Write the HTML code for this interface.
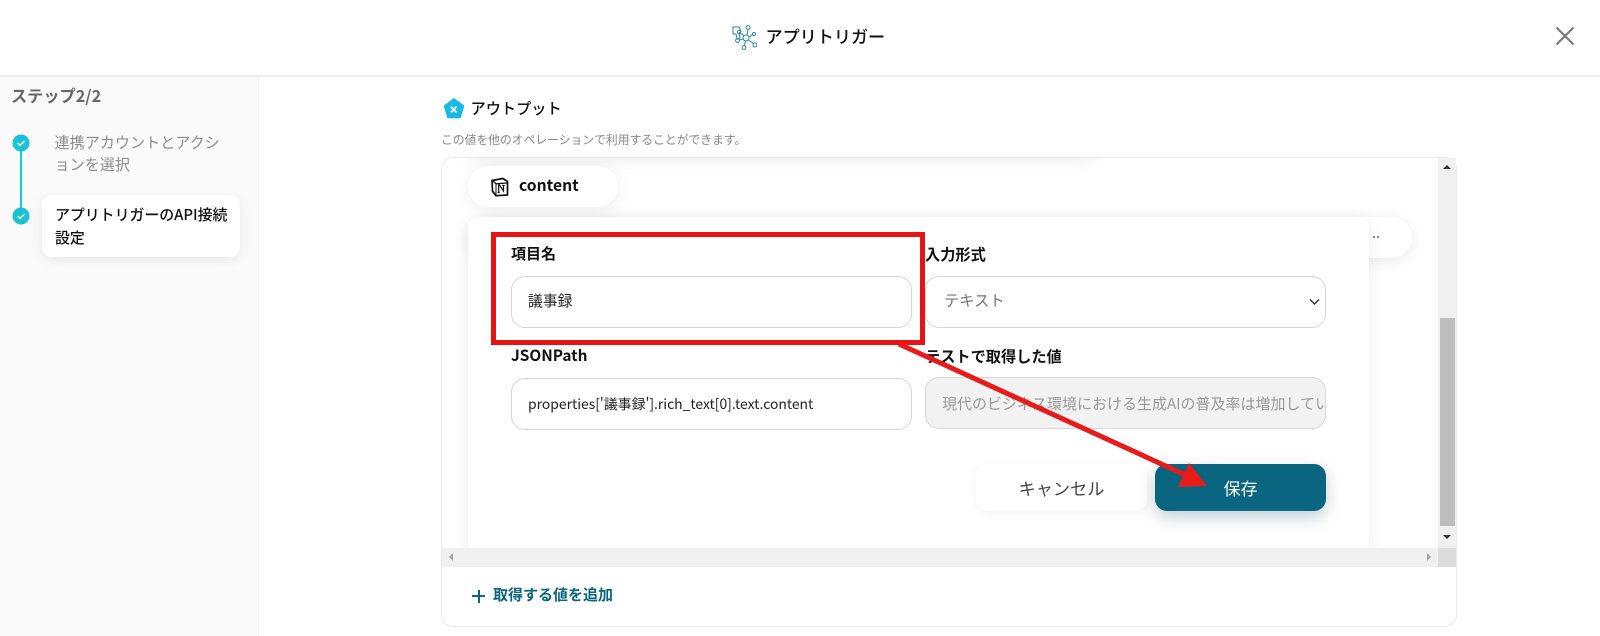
<!DOCTYPE html>
<html lang="ja"><head><meta charset="utf-8"><title>アプリトリガー</title>
<style>
*{box-sizing:border-box}
html,body{margin:0;padding:0}
body{width:1600px;height:636px;overflow:hidden;background:#fff;position:relative;font-family:"Noto Sans CJK JP","Liberation Sans",sans-serif;color:#222}
.a{position:absolute;white-space:nowrap}
.t{line-height:20px}
.inp{position:absolute;border:1px solid #d6d6d6;border-radius:14px;background:#fff;height:52px;width:401px}
</style></head><body>
<div class="a" style="left:0;top:0;width:1600px;height:77px;border-bottom:2px solid #efefef;background:#fff"></div>
<svg class="a" style="left:731px;top:24px" width="26" height="26" viewBox="0 0 26 26" fill="none" stroke="#2a8aa0" stroke-width="1">
<path d="M2 3h6l2 4-2 2 1 5-3 1-1-5H2z" stroke-width="1"/>
<circle cx="15" cy="14" r="3"/><circle cx="17" cy="3.500" r="1.900"/><circle cx="23" cy="10" r="1.500"/><circle cx="24" cy="21" r="2"/><circle cx="13" cy="23.500" r="1.900"/><circle cx="6.500" cy="16.500" r="1.900"/><circle cx="8" cy="8" r="1.700"/>
<path d="M16 11l1-5.500M18 13l3.600-2.500M17.500 16l5 3.500M14.500 17l-1 4.500M12 15l-3.700 1M13 12l-3.700-3"/></svg>
<div class="a" style="left:765.500px;top:24px;font-size:17.100px;font-weight:500;line-height:24px;color:#111">アプリトリガー</div>
<svg class="a" style="left:1555px;top:26px" width="20" height="20" viewBox="0 0 20 20"><path d="M1.500 1.500l17 17M18.500 1.500l-17 17" stroke="#777" stroke-width="2"/></svg>

<div class="a" style="left:0;top:77px;width:259px;height:559px;background:#fafafa;border-right:1px solid #eee"></div>
<div class="a t" style="left:11px;top:85px;font-size:16.200px;font-weight:700;color:#666">ステップ2/2</div>
<div class="a" style="left:19.500px;top:145px;width:2px;height:70px;background:#12cfd8"></div>
<svg class="a" style="left:12px;top:134px" width="18" height="18" viewBox="0 0 18 18"><defs><linearGradient id="g" x1="1" y1="0" x2="0" y2="1"><stop offset="0" stop-color="#22b8ea"/><stop offset="1" stop-color="#10ccc8"/></linearGradient></defs><circle cx="9" cy="9" r="8.500" fill="url(#g)"/><path d="M5.500 9l2.500 2.500 4.500-4.500" fill="none" stroke="#fff" stroke-width="1.500"/></svg>
<svg class="a" style="left:12px;top:207px" width="18" height="18" viewBox="0 0 18 18"><circle cx="9" cy="9" r="8.500" fill="url(#g)"/><path d="M5.500 9l2.500 2.500 4.500-4.500" fill="none" stroke="#fff" stroke-width="1.500"/></svg>
<div class="a" style="left:54.500px;top:131px;font-size:15.100px;line-height:22px;color:#8c8c8c">連携アカウントとアクシ<br>ョンを選択</div>
<div class="a" style="left:42px;top:195px;width:198px;height:62px;border-radius:10px;background:#fff;box-shadow:0 3px 12px rgba(0,0,0,.07)"></div>
<div class="a" style="left:55px;top:204px;font-size:14.900px;font-weight:500;line-height:22.500px;color:#111">アプリトリガーのAPI接続<br>設定</div>

<svg class="a" style="left:443px;top:98px" width="22" height="22" viewBox="0 0 22 22"><path d="M11 1l9.500 7-3.500 11.500H5L1.500 8z" fill="#17b9e6" stroke="#17b9e6" stroke-width="1.500" stroke-linejoin="round"/><path d="M8 8.500l5.500 6M13.500 8.500l-5.500 6" stroke="#fff" stroke-width="1.700"/></svg>
<div class="a t" style="left:470.500px;top:97.500px;font-size:15.200px;font-weight:500;color:#111">アウトプット</div>
<div class="a t" style="left:441px;top:130px;font-size:11.800px;color:#888">この値を他のオペレーションで利用することができます。</div>

<div class="a" style="left:441px;top:157px;width:1016px;height:470px;border:1px solid #ebebeb;border-radius:12px;background:#fff"></div>
<div class="a" style="left:442px;top:158px;width:996px;height:390px;overflow:hidden;background:#fff;border-top-left-radius:11px">
 <div class="a" style="left:20px;top:-40px;width:640px;height:40px;box-shadow:0 3px 16px rgba(0,0,0,.07);border-radius:20px"></div>
 <div class="a" style="left:26px;top:8px;width:150px;height:41px;border-radius:21px;background:#fff;box-shadow:0 3px 16px rgba(0,0,0,.07)"></div>
 <div class="a" style="left:26px;top:59px;width:944px;height:41px;border-radius:21px;background:#fff;box-shadow:0 3px 16px rgba(0,0,0,.09)"></div>
 <div class="a" style="left:26px;top:59px;width:901px;height:340px;border-radius:10px;background:#fff;box-shadow:0 3px 18px rgba(0,0,0,.07)"></div>
</div>
<div class="a" style="left:1373px;top:236px;width:2px;height:2px;background:#888"></div>
<div class="a" style="left:1377px;top:236px;width:2px;height:2px;background:#888"></div>
<svg class="a" style="left:490px;top:177px" width="20" height="20" viewBox="0 0 20 20"><path d="M2 3.500L13 1.500l4.500 3v13.500l-11.500.700-3.500-4.500z" fill="#fff" stroke="#111" stroke-width="1.700" stroke-linejoin="round"/><path d="M2.500 3.500l3.500 3.300 11-.800" fill="none" stroke="#111" stroke-width="1.300"/><path d="M6 7v11" stroke="#111" stroke-width="1"/><path d="M8 8h1.500l4 6V8.500M8.700 8v7.500M7.700 15.500h2M12.300 8.500h2.300" fill="none" stroke="#111" stroke-width="1.200"/></svg>
<div class="a t" style="left:519px;top:175px;font-size:15.700px;font-weight:700;color:#111">content</div>

<div class="a t" style="left:511px;top:244px;font-size:15px;font-weight:700;color:#111">項目名</div>
<div class="inp" style="left:511px;top:276px"></div>
<div class="a t" style="left:528px;top:291px;font-size:14.800px;color:#222">議事録</div>
<div class="a t" style="left:925px;top:244px;font-size:15.200px;font-weight:700;color:#111">入力形式</div>
<div class="inp" style="left:925px;top:276px"></div>
<div class="a t" style="left:944px;top:290px;font-size:15.300px;color:#777">テキスト</div>
<svg class="a" style="left:1309px;top:298px" width="11" height="8" viewBox="0 0 11 8"><path d="M1 1.500l4.500 4.500 4.500-4.500" fill="none" stroke="#333" stroke-width="1.500"/></svg>
<div class="a t" style="left:511px;top:345px;font-size:15.400px;font-weight:700;color:#111">JSONPath</div>
<div class="inp" style="left:511px;top:378px"></div>
<div class="a t" style="left:528px;top:393.500px;font-size:13.900px;color:#222">properties['議事録'].rich_text[0].text.content</div>
<div class="a t" style="left:925px;top:345.500px;font-size:15.200px;font-weight:700;color:#111">テストで取得した値</div>
<div class="inp" style="left:925px;top:377px;background:#f2f2f2;overflow:hidden"><div class="a t" style="left:16px;top:16px;font-size:15px;color:#999">現代のビジネス環境における生成AIの普及率は増加しています</div></div>

<div class="a" style="left:976px;top:464px;width:171px;height:47px;border-radius:12px;background:#fff;box-shadow:0 2px 10px rgba(0,0,0,.05);text-align:center;font-size:17.200px;line-height:47px;color:#444">キャンセル</div>
<div class="a" style="left:1155px;top:464px;width:171px;height:47px;border-radius:12px;background:#0a6680;box-shadow:0 6px 16px rgba(10,60,90,.25);text-align:center;font-size:17px;line-height:47px;color:#fff">保存</div>

<div class="a" style="left:442px;top:548px;width:996px;height:19px;background:#f0f0f0"></div>
<div class="a" style="left:1438px;top:158px;width:18px;height:390px;background:#f0f0f0"></div>
<div class="a" style="left:1438px;top:548px;width:18px;height:19px;background:#dcdcdc"></div>
<div class="a" style="left:1440px;top:318px;width:14.500px;height:208px;background:#bdbdbd"></div>
<svg class="a" style="left:442px;top:158px" width="1014" height="409" viewBox="442 158 1014 409"><path d="M1447 165l4 4h-8zM1443 535h8l-4 4z" fill="#333"/><path d="M453 553v8l-4-4zM1427 553v8l4-4z" fill="#a3a3a3"/></svg>

<div class="a" style="left:472px;top:595px;width:13px;height:2px;background:#0a6680"></div>
<div class="a" style="left:477.500px;top:590px;width:2px;height:13px;background:#0a6680"></div>
<div class="a t" style="left:493px;top:585px;font-size:15px;font-weight:700;color:#0a6680">取得する値を追加</div>

<div class="a" style="left:491px;top:232px;width:434px;height:113px;border:5px solid #e81414"></div>
<svg class="a" style="left:0;top:0" width="1600" height="636"><path d="M899 344L1192 478" stroke="#e81a1a" stroke-width="5"/><path d="M1189 463L1207 486 1178 487z" fill="#e81a1a"/></svg>
</body></html>
